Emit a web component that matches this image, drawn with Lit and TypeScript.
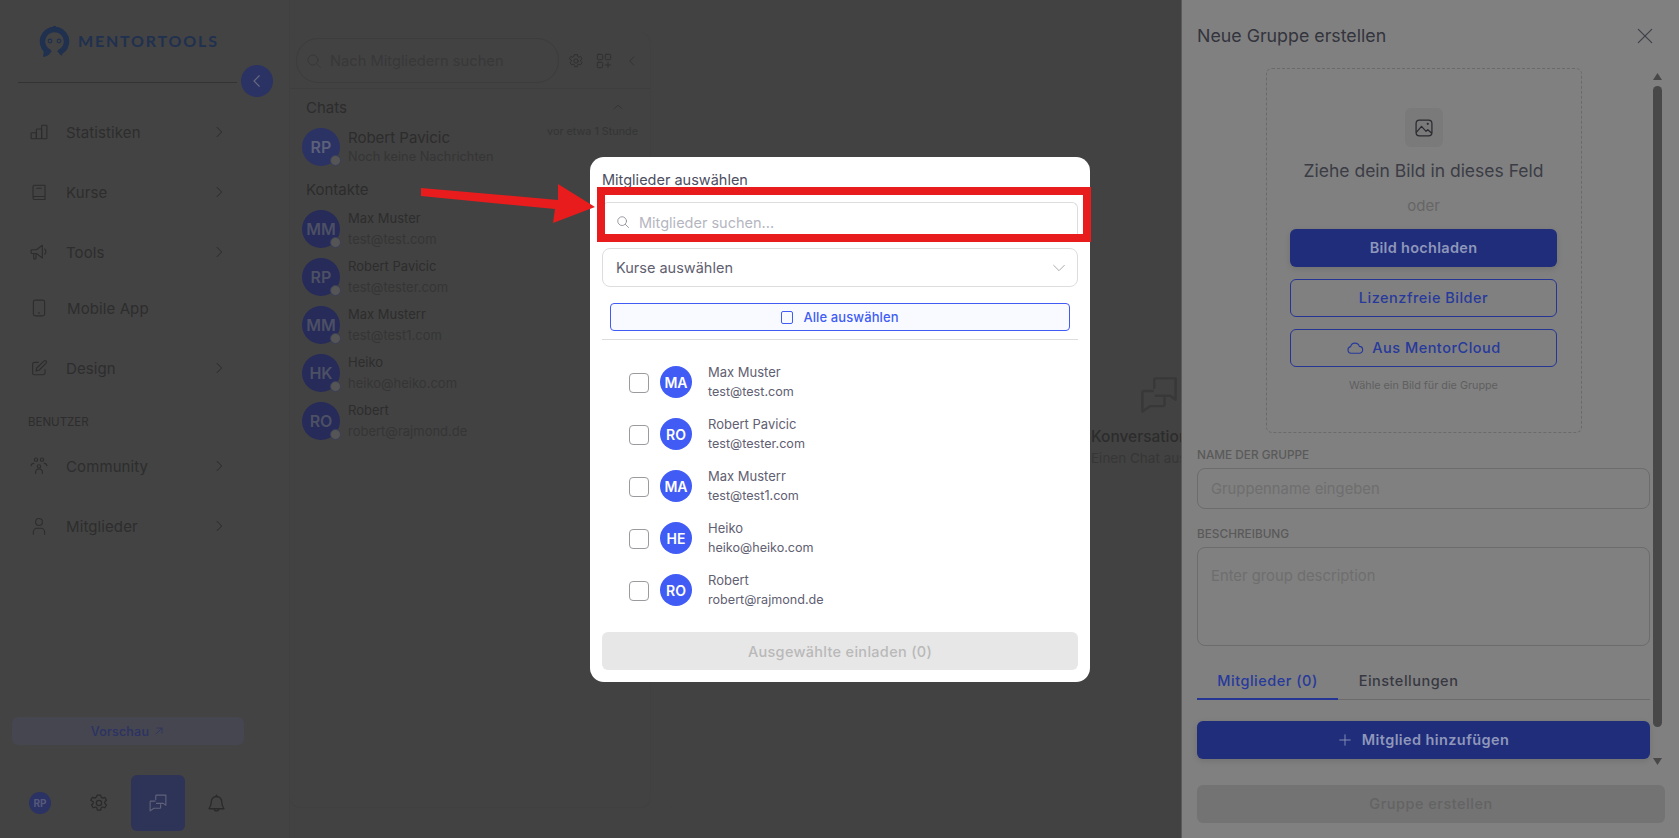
import { LitElement, html, css, svg } from "lit";
import { customElement } from "lit/decorators.js";

const ic = (body: unknown, size = 20, vb = 24) => html`<svg class="ic" width=${size} height=${size} viewBox="0 0 ${vb} ${vb}" fill="none" stroke="currentColor" stroke-width="1.5" stroke-linecap="round" stroke-linejoin="round">${body}</svg>`;

const icons: Record<string, unknown> = {
  chart: svg`<rect x="1.500" y="13" width="7" height="8" rx="1"/><rect x="8.500" y="8" width="7" height="13" rx="1"/><rect x="15.500" y="3" width="7" height="18" rx="1"/>`,
  book: svg`<path d="M4 18V5a2 2 0 0 1 2-2h14v15H6a2 2 0 0 0-2 2 2 2 0 0 0 2 2h14v-4"/><path d="M9 7h6"/>`,
  mega: svg`<path d="M1.500 10a1 1 0 0 1 1-1h6l8-6v17l-8-6h-6a1 1 0 0 1-1-1z"/><path d="M5 14v6a1.500 1.500 0 0 0 3 0v-6"/><path d="M19.500 8a4.500 4.500 0 0 1 0 7"/>`,
  phone: svg`<rect x="4.500" y="1.500" width="15" height="21" rx="2.500"/><path d="M11.500 18.500h1"/>`,
  edit: svg`<path d="M11 4.500H6a2.500 2.500 0 0 0-2.500 2.500v12A2 2 0 0 0 5.500 21h12a2.500 2.500 0 0 0 2.500-2.500V14"/><path d="M18.500 2.800a2 2 0 0 1 3 2.800L12 15l-4 1 1-4z"/>`,
  users: svg`<circle cx="8" cy="3.500" r="2.200"/><circle cx="16" cy="3.500" r="2.200"/><circle cx="12" cy="12.500" r="2.200"/><path d="M1.500 11.500a3.500 3.500 0 0 1 3.500-3M22.500 11.500a3.500 3.500 0 0 0-3.500-3M7.500 22v-1.500a4 4 0 0 1 9 0V22"/>`,
  user: svg`<circle cx="12" cy="6.500" r="4.500"/><path d="M4.500 23v-3a5 5 0 0 1 5-5h5a5 5 0 0 1 5 5v3"/>`,
  right: svg`<path d="M9 5l7 7-7 7"/>`,
  left: svg`<path d="M15 5l-7 7 7 7"/>`,
  up: svg`<path d="M5 15l7-6 7 6"/>`,
  down: svg`<path d="M4 8l8 8 8-8"/>`,
  search: svg`<circle cx="10.500" cy="10.500" r="7.500"/><path d="M16 16l5.500 5.500"/>`,
  gear: svg`<path d="M10 2.500h4l.6 2.800 1.700.9 2.700-.9 2 3.400-2.100 1.900v1.800l2.100 1.900-2 3.400-2.700-.9-1.700.9-.6 2.800h-4l-.6-2.800-1.700-.9-2.700.9-2-3.400 2.100-1.900v-1.800L2 8.700l2-3.400 2.700.9 1.700-.9z"/><circle cx="12" cy="12" r="3.200"/>`,
  grid: svg`<rect x="2" y="2" width="8" height="8" rx="1.500"/><rect x="14" y="2" width="8" height="8" rx="1.500"/><rect x="2" y="14" width="8" height="8" rx="1.500"/><path d="M18 14v8M14 18h8"/>`,
  chat: svg`<path d="M9 7.500V2.500a1 1 0 0 1 1-1h12.500v13.500L19 12.500h-9"/><path d="M8 9.500H2.500a1 1 0 0 0-1 1v12l5-3.500h8a1 1 0 0 0 1-1V14"/>`,
  bell: svg`<path d="M6 10a6 6 0 0 1 12 0c0 6 2.500 7 2.500 8h-17c0-1 2.500-2 2.500-8z"/><path d="M9.500 18a2.500 2.500 0 0 0 5 0"/><path d="M12 4V2.500"/>`,
  arrowUR: svg`<path d="M6 18L18 6M8 6h10v10"/>`,
  close: svg`<path d="M4 4l16 16M20 4L4 20"/>`,
  image: svg`<rect x="2.500" y="2.500" width="19" height="19" rx="4"/><path d="M3 17l6-7 5.500 6 2-2 4.500 4"/><circle cx="16.500" cy="7" r=".6"/>`,
  cloud: svg`<path d="M7 19a4.500 4.500 0 0 1-.8-8.900A6 6 0 0 1 17.800 9.800 4.600 4.600 0 0 1 17.500 19z"/>`,
  plus: svg`<path d="M12 3v18M3 12h18"/>`,
};

const nav = [
  { t: "Statistiken", i: "chart", c: true },
  { t: "Kurse", i: "book", c: true },
  { t: "Tools", i: "mega", c: true },
  { t: "Mobile App", i: "phone", c: false },
  { t: "Design", i: "edit", c: true },
];
const nav2 = [
  { t: "Community", i: "users", c: true },
  { t: "Mitglieder", i: "user", c: true },
];
const contacts = [
  { n: "Max Muster", e: "test@test.com", a: "MM", m: "MA" },
  { n: "Robert Pavicic", e: "test@tester.com", a: "RP", m: "RO" },
  { n: "Max Musterr", e: "test@test1.com", a: "MM", m: "MA" },
  { n: "Heiko", e: "heiko@heiko.com", a: "HK", m: "HE" },
  { n: "Robert", e: "robert@rajmond.de", a: "RO", m: "RO" },
];

@customElement("app-root")
export class AppRoot extends LitElement {
  static styles = css`
    :host { display: block; position: relative; width: 1679px; height: 838px; overflow: hidden; font-family: Inter, "Noto Sans", sans-serif; background: #424242; }
    * { box-sizing: border-box; }
    .ic { display: block; flex: none; }
    .page { display: flex; height: 838px; }

    .side { width: 290px; flex: none; height: 838px; display: flex; flex-direction: column; border-right: 1px solid #404040; background: #434343; color: #2d2d2d; }
    .logo { height: 82px; padding: 26px 0 0 39px; display: flex; gap: 8px; align-items: flex-start; }
    .logo span { font-family: Lato, sans-serif; font-weight: 700; font-size: 16px; letter-spacing: 1.800px; color: #20304f; line-height: 30px; }
    .rule { position: relative; height: 1px; margin: 0 52px 0 18px; background: #333; }
    .collapse { position: absolute; left: 223px; top: -17px; width: 32px; height: 32px; border-radius: 50%; background: #2b3264; color: #666a80; display: flex; align-items: center; justify-content: center; }
    .navlist { padding-top: 19px; flex: 1; display: flex; flex-direction: column; }
    .item { height: 60px; display: flex; align-items: center; padding-left: 30px; font-size: 15px; letter-spacing: .1px; color: #2d2d2d; }
    .item .lab { margin-left: 18px; width: 145px; }
    .item .chev { color: #2a2a2a; }
    .item.short { height: 52px; margin-bottom: 4px; }
    .item.short .lab { margin-left: 19px; }
    .sect { height: 38px; padding: 16px 0 0 28px; font-size: 11.500px; line-height: 16px; color: #2d2d2d; }
    .preview { height: 28px; margin: 0 45px 30px 12px; border-radius: 6px; background: #454650; color: #2b3264; display: flex; align-items: center; justify-content: center; gap: 4px; font-size: 12.500px; font-weight: 500; letter-spacing: .2px; }
    .dock { height: 56px; margin-bottom: 7px; display: flex; align-items: center; color: #2a2a2a; }
    .me { width: 22px; height: 22px; margin-left: 29px; border-radius: 50%; background: #2b3264; color: #55597a; font-size: 10px; font-weight: 700; display: flex; align-items: center; justify-content: center; }
    .dock .gear { margin-left: 38px; }
    .dock .active { width: 54px; height: 56px; margin-left: 22px; border-radius: 6px; background: #2e3358; color: #60637a; display: flex; align-items: center; justify-content: center; }
    .dock .bell { margin-left: 21px; }

    .main { flex: 1; min-width: 0; overflow: hidden; display: flex; gap: 15px; padding-top: 33px; }
    .chats { width: 361px; flex: none; height: 775px; border-radius: 10px; background: #424242; border-right: 1px solid #404040; border-bottom: 1px solid #404040; }
    .searchrow { height: 56px; padding: 5px 0 0 6px; display: flex; border-bottom: 1px solid #3e3e3e; color: #303030; }
    .pill { width: 263px; height: 45px; border: 1px solid #3c3c3c; border-radius: 22px; display: flex; align-items: center; gap: 8px; padding-left: 9px; font-size: 14.700px; color: #383838; }
    .tool { width: 28px; height: 45px; display: flex; align-items: center; justify-content: center; }
    .tool.first { margin-left: 3px; }
    .sec { height: 36px; padding: 0 25px 0 16px; display: flex; align-items: center; justify-content: space-between; font-size: 15px; color: #2c2c2c; }
    .sec .ic { color: #333; }
    .chat-row { height: 44px; padding: 0 12px; display: flex; gap: 8px; align-items: center; position: relative; }
    .av { position: relative; width: 38px; height: 38px; flex: none; border-radius: 50%; background: #262b59; color: #4d5064; font-weight: 600; font-size: 16px; display: flex; align-items: center; justify-content: center; }
    .av.top { background: #2b3264; color: #5c607a; }
    .av i { position: absolute; right: -1px; bottom: 0; width: 11px; height: 11px; border-radius: 50%; background: #555; border: 1px solid #3a3f5a; }
    .cname { font-size: 15px; color: #2c2c2c; line-height: 19px; }
    .csub { font-size: 12.800px; color: #353535; line-height: 20px; }
    .time { position: absolute; right: 12px; top: 0; font-size: 10.800px; color: #343434; }
    .kontakte { height: 32px; margin-top: 4px; }
    .contact { height: 48px; padding: 0 12px; display: flex; gap: 8px; align-items: center; }
    .contact .cname { font-size: 13px; line-height: 21px; color: #2d2d2d; }
    .contact .csub { font-size: 13px; line-height: 21px; color: #353535; }

    .conv { width: 986px; flex: none; height: 775px; border-radius: 10px; background: #424242; display: flex; flex-direction: column; align-items: center; padding-top: 343px; color: #383838; }
    .convtext { width: 136px; margin-top: 13px; white-space: nowrap; }
    .conv .t1 { font-size: 15.500px; font-weight: 500; line-height: 20px; color: #2c2c2c; }
    .conv .t2 { margin-top: 1px; font-size: 13.500px; line-height: 20px; color: #363636; }

    .drawer { width: 498px; flex: none; height: 838px; background: #808080; color: #33343d; border-left: 1px solid #5a5a5a; padding-left: 15px; display: flex; flex-direction: column; position: relative; }
    .dhead { height: 68px; display: flex; align-items: center; justify-content: space-between; padding: 0 24px 0 0; font-size: 17.800px; }
    .dhead > div { margin-top: 2px; }
    .dhead .ic { color: #3f4048; margin-top: 4px; }
    .dbody { flex: none; height: 704px; display: flex; }
    .dcontent { width: 453px; flex: none; }
    .sb { width: 9px; margin-left: 3px; display: flex; flex-direction: column; align-items: center; padding-top: 5px; }
    .sb .tri { width: 9px; height: 7px; flex: none; background: #484848; clip-path: polygon(50% 0, 100% 100%, 0 100%); }
    .sb .tri.d { clip-path: polygon(0 0, 100% 0, 50% 100%); margin-top: 31px; }
    .sb .thumb { width: 9px; height: 641px; flex: none; margin-top: 6px; border-radius: 5px; background: #484848; }
    .drop { width: 316px; height: 365px; margin: 0 auto; border: 1px dashed #6a6a6a; border-radius: 6px; padding-top: 39px; display: flex; flex-direction: column; align-items: center; }
    .square { width: 38px; height: 39px; border-radius: 6px; background: #7a7a7a; color: #2a2a30; display: flex; align-items: center; justify-content: center; }
    .dt { margin-top: 12px; height: 24px; line-height: 24px; font-size: 17.500px; color: #3b3c45; }
    .or { margin-top: 12px; height: 22px; line-height: 22px; font-size: 15px; color: #666; }
    .b { width: 267px; height: 38px; flex: none; border-radius: 6px; padding-bottom: 1px; display: flex; align-items: center; justify-content: center; gap: 8px; font-size: 14.500px; font-weight: 500; letter-spacing: .5px; }
    .b.fill { margin-top: 12px; background: #1f2d7b; color: #8f97ba; font-weight: 600; letter-spacing: .3px; box-shadow: 0 2px 6px rgba(0,0,0,.12); }
    .b.line { margin-top: 12px; border: 1px solid #243594; color: #27399c; }
    .b.add { width: 453px; margin-top: 21px; gap: 10px; letter-spacing: .4px; }
    .cap { margin-top: 11px; font-size: 10.800px; line-height: 16px; color: #5f5f5f; }
    .lbl { font-size: 11.800px; font-weight: 500; color: #5a5a5a; line-height: 16px; }
    .lbl.a { margin-top: 14px; }
    .lbl.b2 { margin-top: 17px; }
    .field { margin-top: 5px; border: 1px solid #6c6c6c; border-radius: 8px; padding: 0 13px; color: #6e6e6e; font-size: 14.800px; }
    .field.one { height: 41px; line-height: 41px; }
    .field.two { height: 99px; padding-top: 19px; line-height: 18px; }
    .tabs { margin-top: 20px; height: 34px; display: flex; border-bottom: 1px solid #6b6b6b; font-size: 14.500px; font-weight: 500; letter-spacing: .5px; }
    .tab { width: 141px; height: 34px; border-bottom: 2px solid #243594; color: #27399c; text-align: center; line-height: 30px; }
    .tab.off { border-bottom: none; color: #373842; }
    .create { width: 468px; height: 38px; margin-top: 13px; padding-bottom: 2px; border-radius: 6px; background: #737373; color: #636363; display: flex; align-items: center; justify-content: center; font-size: 14.500px; font-weight: 500; letter-spacing: .5px; }

    .modal { position: absolute; left: 590px; top: 157px; width: 500px; height: 525px; border-radius: 14px; background: #fff; padding: 14px 12px 12px; color: #55566a; display: flex; flex-direction: column; }
    .mt { height: 18px; line-height: 18px; font-size: 14.500px; font-weight: 400; color: #4d4e5f; }
    .msearch { margin-top: 13px; height: 35px; padding-top: 4px; border: 1px solid #ddd; border-bottom: none; border-radius: 6px 6px 0 0; display: flex; align-items: center; gap: 9px; padding-left: 13px; font-size: 14.500px; color: #b5b6bf; }
    .msearch .ic { color: #8e8f98; }
    .select { margin-top: 11px; height: 39px; border: 1px solid #ddd; border-radius: 8px; display: flex; align-items: center; justify-content: space-between; padding: 0 10px 0 13px; font-size: 14.500px; color: #5f6070; }
    .select .ic { color: #aaa; }
    .all { margin: 16px 8px 0; height: 28px; border: 1px solid #405cf5; border-radius: 4px; background: #f9faff; color: #405cf5; display: flex; align-items: center; justify-content: center; gap: 10px; font-size: 13px; font-weight: 500; letter-spacing: .1px; }
    .box { width: 12px; height: 13px; border: 1.500px solid #405cf5; border-radius: 2px; }
    .hr { margin-top: 8px; height: 1px; background: #ddd; flex: none; }
    .list { padding: 16px 0 0 27px; flex: 1; }
    .mrow { height: 52px; display: flex; align-items: center; }
    .chk { width: 20px; height: 20px; border: 1px solid #9b9b9f; border-radius: 4px; flex: none; margin: 2px 11px 0 0; }
    .mav { width: 32px; height: 32px; border-radius: 50%; background: #405cf5; color: #fff; font-size: 14px; font-weight: 600; display: flex; align-items: center; justify-content: center; flex: none; margin-right: 16px; }
    .mname { font-size: 13px; line-height: 20px; color: #5f6072; }
    .mmail { font-size: 12.600px; line-height: 20px; color: #5f6072; }
    .invite { height: 38px; border-radius: 6px; background: #e7e7e7; color: #b9b9b9; display: flex; align-items: center; justify-content: center; font-size: 14.500px; font-weight: 500; letter-spacing: .3px; }

    .mark { position: absolute; left: 597px; top: 187px; width: 494px; height: 55px; border: 8px solid #e81c1c; pointer-events: none; }
    .arrow { position: absolute; left: 415px; top: 178px; pointer-events: none; }
  `;

  private navItem(n: { t: string; i: string; c: boolean }) {
    return html`<div class="item ${n.c ? "" : "short"}">${ic(icons[n.i], 18)}<span class="lab">${n.t}</span>${n.c ? html`<span class="chev">${ic(icons.right, 16)}</span>` : ""}</div>`;
  }

  render() {
    return html`
      <div class="page">
        <aside class="side">
          <div class="logo">
            <svg width="31" height="31" viewBox="0 0 31 31">
              <path fill="#20304f" d="M14 0h3v2h2v3h-7V2h2z"/>
              <path fill="none" stroke="#20304f" stroke-width="5.500" d="M11 26.500A12 12 0 1 1 20 26.500"/>
              <path fill="#20304f" d="M4 31l1-7 8 1-5 5zM18 25l6-2-1 7z"/>
              <circle cx="11" cy="15" r="1.800" fill="none" stroke="#20304f" stroke-width="1.200"/>
              <circle cx="20" cy="15" r="1.800" fill="none" stroke="#20304f" stroke-width="1.200"/>
            </svg>
            <span>MENTORTOOLS</span>
          </div>
          <div class="rule"><div class="collapse">${ic(icons.left, 18)}</div></div>
          <div class="navlist">
            ${nav.map((n) => this.navItem(n))}
            <div class="sect">BENUTZER</div>
            ${nav2.map((n) => this.navItem(n))}
          </div>
          <div class="preview">Vorschau ${ic(icons.arrowUR, 12)}</div>
          <div class="dock">
            <div class="me">RP</div>
            <span class="gear">${ic(icons.gear, 20)}</span>
            <div class="active">${ic(icons.chat, 18)}</div>
            <span class="bell">${ic(icons.bell, 21)}</span>
          </div>
        </aside>
        <div class="main">
          <section class="chats">
            <div class="searchrow">
              <div class="pill">${ic(icons.search, 16)}Nach Mitgliedern suchen</div>
              <div class="tool first">${ic(icons.gear, 16)}</div>
              <div class="tool">${ic(icons.grid, 16)}</div>
              <div class="tool">${ic(icons.left, 14)}</div>
            </div>
            <div class="sec"><span>Chats</span>${ic(icons.up, 14)}</div>
            <div class="chat-row">
              <div class="av top">RP<i></i></div>
              <div><div class="cname">Robert Pavicic</div><div class="csub">Noch keine Nachrichten</div></div>
              <div class="time">vor etwa 1 Stunde</div>
            </div>
            <div class="sec kontakte"><span>Kontakte</span></div>
            ${contacts.map((c) => html`<div class="contact"><div class="av">${c.a}<i></i></div><div><div class="cname">${c.n}</div><div class="csub">${c.e}</div></div></div>`)}
          </section>
          <section class="conv">
            ${ic(icons.chat, 38)}
            <div class="convtext">
              <div class="t1">Konversation</div>
              <div class="t2">Einen Chat aus</div>
            </div>
          </section>
        </div>
        <aside class="drawer">
          <div class="dhead"><div>Neue Gruppe erstellen</div>${ic(icons.close, 20)}</div>
          <div class="dbody">
            <div class="dcontent">
              <div class="drop">
                <div class="square">${ic(icons.image, 20)}</div>
                <div class="dt">Ziehe dein Bild in dieses Feld</div>
                <div class="or">oder</div>
                <div class="b fill">Bild hochladen</div>
                <div class="b line">Lizenzfreie Bilder</div>
                <div class="b line">${ic(icons.cloud, 18)}Aus MentorCloud</div>
                <div class="cap">Wähle ein Bild für die Gruppe</div>
              </div>
              <div class="lbl a">NAME DER GRUPPE</div>
              <div class="field one">Gruppenname eingeben</div>
              <div class="lbl b2">BESCHREIBUNG</div>
              <div class="field two">Enter group description</div>
              <div class="tabs"><div class="tab">Mitglieder (0)</div><div class="tab off">Einstellungen</div></div>
              <div class="b fill add">${ic(icons.plus, 14)}Mitglied hinzufügen</div>
            </div>
            <div class="sb"><div class="tri"></div><div class="thumb"></div><div class="tri d"></div></div>
          </div>
          <div class="create">Gruppe erstellen</div>
        </aside>
      </div>

      <div class="modal">
        <div class="mt">Mitglieder auswählen</div>
        <div class="msearch">${ic(icons.search, 14)}Mitglieder suchen...</div>
        <div class="select">Kurse auswählen ${ic(icons.down, 16)}</div>
        <div class="all"><span class="box"></span>Alle auswählen</div>
        <div class="hr"></div>
        <div class="list">
          ${contacts.map((c) => html`<div class="mrow"><span class="chk"></span><div class="mav">${c.m}</div><div><div class="mname">${c.n}</div><div class="mmail">${c.e}</div></div></div>`)}
        </div>
        <div class="invite">Ausgewählte einladen (0)</div>
      </div>
      <div class="mark"></div>
      <svg class="arrow" width="185" height="50" viewBox="0 0 185 50"><polygon fill="#e81c1c" points="6,10 143,22 143,6 180,29 138,45 140,31 6,18"/></svg>
    `;
  }
}
